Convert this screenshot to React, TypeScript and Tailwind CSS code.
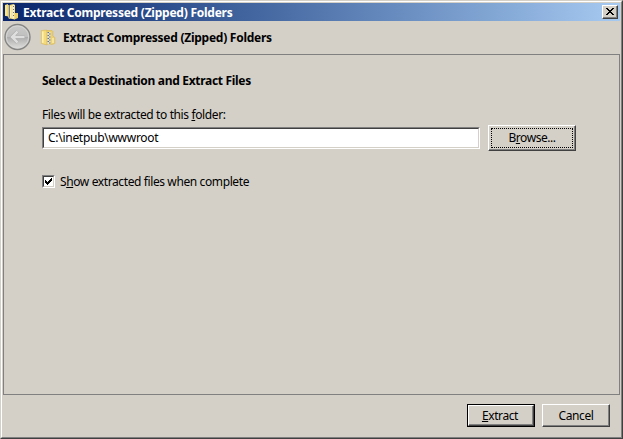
import type { ReactNode } from "react";

function TitleZipIcon() {
  return (
    <svg viewBox="0 0 16 16" className="h-4 w-4 shrink-0" aria-hidden="true">
      <path d="M1 1 4 0v12.500l-3-.7z" fill="#f4d96c" />
      <path d="M1.500 1.500h1V12h-1z" fill="#fff0a8" />
      <path d="M4 1h1v11.500L6 15H5l-1-2z" fill="#c9c3a4" />
      <path d="M5.500 1 9.500 0 11 1v14.500l-5.500-1z" fill="#f3d978" />
      <path d="M6 2h1.500v12L6 13.500z" fill="#fff1b4" />
      <path d="M10.500 9H14v5l-3.500 1.500z" fill="#edcf69" />
      <path d="M8.500 1h1.700v13.500H8.500z" fill="#f6f3e4" />
      <path d="M9 2.500h1M9 5.500h1M9 8.500h1M9 11.500h1" stroke="#77735f" />
    </svg>
  );
}

function ZipIcon() {
  return (
    <svg viewBox="0 0 16 17" className="ml-2 h-[17px] w-4 shrink-0" aria-hidden="true">
      <path d="M5 1.500h7l.8.8v4.700l2 1.500v6L12 15.500H5z" fill="#efd16c" stroke="#d3b04f" strokeWidth=".5" />
      <path d="M12 9h2v5h-2z" fill="#f9e799" />
      <path d="M1.300 1.500 6.800 1v15l-5.500-1.500z" fill="#f5da79" stroke="#d2b154" strokeWidth=".5" />
      <path d="M2 2.500h1.500V14L2 13.700z" fill="#fff1ad" />
      <path d="M7.500 3h3v12.500h-3z" fill="#deded2" />
      <path d="M7.500 3.500H9M9 5h1.500M7.500 6.500H9M9 8h1.500M7.500 9.500H9M9 11h1.500M7.500 12.500H9M9 14h1.500" stroke="#667386" />
    </svg>
  );
}

function BackButton() {
  return (
    <svg viewBox="0 0 28 28" className="-mt-[2px] h-7 w-7 shrink-0" aria-hidden="true">
      <defs>
        <linearGradient id="back" x1="0" y1="0" x2="0" y2="1">
          <stop offset="0" stopColor="#c9c9c8" />
          <stop offset=".48" stopColor="#bfbfbf" />
          <stop offset=".52" stopColor="#adadad" />
          <stop offset="1" stopColor="#dcdcdb" />
        </linearGradient>
      </defs>
      <circle cx="13.500" cy="14" r="12.500" fill="#c8c8c7" stroke="#858584" strokeWidth="1.400" />
      <circle cx="13.500" cy="14" r="11.100" fill="url(#back)" stroke="#d9d9d8" strokeWidth=".8" />
      <path d="M20.500 14H8m5.500-5.500L8 14l5.500 5.500" fill="none" stroke="#a3a3a3" strokeWidth="3.500" />
      <path d="M20.500 14H8m5.500-5.500L8 14l5.500 5.500" fill="none" stroke="#dedede" strokeWidth="2.500" />
    </svg>
  );
}

function Key({ children }: { children: ReactNode }) {
  return <span className="underline decoration-1 underline-offset-1">{children}</span>;
}

const raised =
  "border border-t-white border-l-white border-r-[#404040] border-b-[#404040] bg-[#d4d0c8] shadow-[inset_-1px_-1px_0_#808080]";

export default function App() {
  return (
    <div className="flex h-[439px] w-[623px] flex-col overflow-hidden border border-t-[#d4d0c8] border-r-[#404040] border-b-[#404040] border-l-[#d4d0c8] bg-[#d4d0c8] font-['Noto_Sans','Open_Sans',sans-serif] text-[12px] leading-4 text-black">
      <div className="flex min-h-0 flex-1 flex-col border border-t-white border-r-[#808080] border-b-[#808080] border-l-white px-px pt-px">
        <header className="flex h-[18px] shrink-0 items-center bg-linear-to-r from-[#0a246a] to-[#a6caf0] pr-[2px] pl-px">
          <TitleZipIcon />
          <h1 className="ml-[3px] flex-1 pt-px whitespace-nowrap font-bold tracking-[-0.24px] text-white">Extract Compressed (Zipped) Folders</h1>
          <button aria-label="Close" className={`flex h-[14px] w-4 items-start justify-center pt-[2px] ${raised}`}>
            <svg viewBox="0 0 8 7" className="h-[7px] w-2" shapeRendering="crispEdges" aria-hidden="true">
              <path d="M0 0h2v1h1v1h2V1h1V0h2v1H7v1H6v1H5v1h1v1h1v1h1v1H6V6H5V5H3v1H2v1H0V6h1V5h1V4h1V3H2V2H1V1H0z" />
            </svg>
          </button>
        </header>

        <div className="flex h-[33px] shrink-0 items-center pl-px">
          <BackButton />
          <ZipIcon />
          <h2 className="ml-[7px] whitespace-nowrap font-bold tracking-[-0.26px]">Extract Compressed (Zipped) Folders</h2>
        </div>

        <main className="h-[341px] shrink-0 border border-[#808080] pt-[18px] pl-[38px]">
          <h3 className="font-bold tracking-[-0.31px]">Select a Destination and Extract Files</h3>
          <label htmlFor="path" className="mt-[18px] block tracking-[-0.38px]">
            Files will be extracted to this <Key>f</Key>older:
          </label>
          <div className="mt-[2px] flex items-center gap-2">
            <div className="h-[22px] w-[438px] border border-t-[#808080] border-r-white border-b-white border-l-[#808080]">
              <div id="path" className="h-5 border border-t-[#404040] border-r-[#d4d0c8] border-b-[#d4d0c8] border-l-[#404040] bg-white pl-1 leading-[18px] tracking-[-0.28px]">
                C:\inetpub\wwwroot
              </div>
            </div>
            <button className={`h-[26px] w-[88px] p-[2px] ${raised}`}>
              <span className="flex h-5 items-center justify-center border border-dotted border-black tracking-[-0.45px]">
                <span>B<Key>r</Key>owse...</span>
              </span>
            </button>
          </div>
          <div className="mt-[22px] flex items-center">
            <span className="h-[13px] w-[13px] border border-t-[#808080] border-r-white border-b-white border-l-[#808080]">
              <span className="flex h-[11px] w-[11px] items-center justify-center border border-t-[#404040] border-r-[#d4d0c8] border-b-[#d4d0c8] border-l-[#404040] bg-white">
                <svg viewBox="0 0 7 7" className="h-[7px] w-[7px]" shapeRendering="crispEdges" aria-hidden="true">
                  <path d="M0 2h1v1h1v1h1V3h1V2h1V1h1V0h1v3H6v1H5v1H4v1H3v1H2V6H1V5H0z" />
                </svg>
              </span>
            </span>
            <span className="ml-[5px] pt-px tracking-[-0.39px]">S<Key>h</Key>ow extracted files when complete</span>
          </div>
        </main>

        <footer className="flex shrink-0 gap-[7px] pt-[9px] pl-[464px] tracking-[-0.4px]">
          <button className="h-[23px] w-[68px] border border-black">
            <span className={`flex h-[21px] items-center justify-center pr-[2px] ${raised}`}>
              <span><Key>E</Key>xtract</span>
            </span>
          </button>
          <button className={`h-[23px] w-[68px] ${raised}`}>Cancel</button>
        </footer>
      </div>
    </div>
  );
}
